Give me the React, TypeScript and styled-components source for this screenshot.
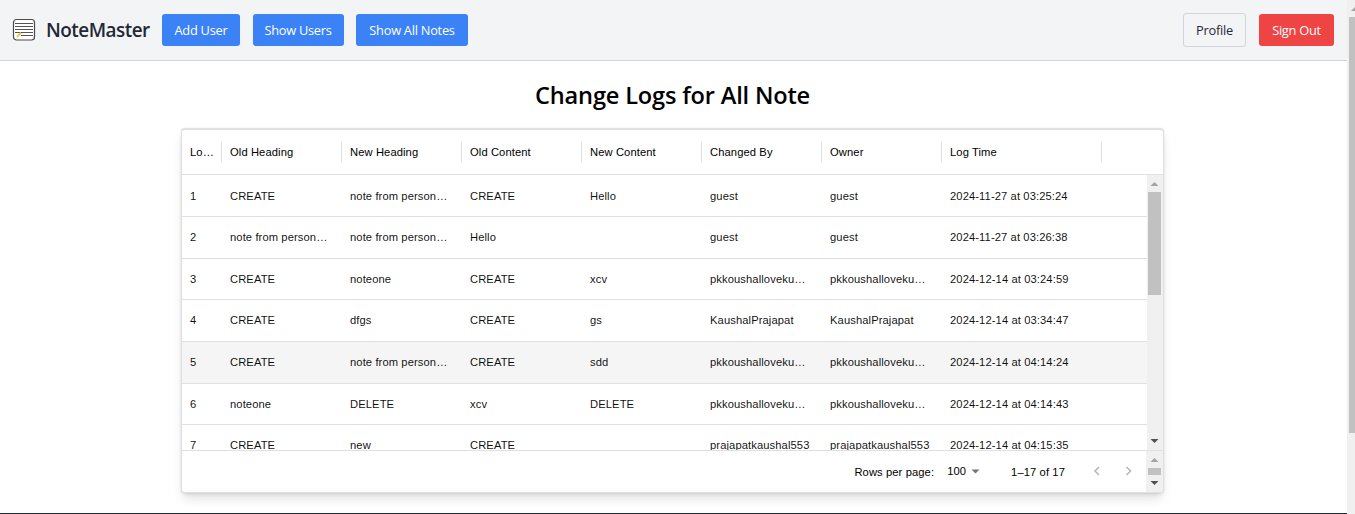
import React from "react";
import styled, { createGlobalStyle } from "styled-components";

const Global = createGlobalStyle`
  * { box-sizing: border-box; }
  html, body { margin: 0; padding: 0; height: 100%; overflow: hidden; background: #fff; }
  #root { height: 100vh; }
`;

const ui = `"Segoe UI", "Open Sans", "Noto Sans", sans-serif`;

const Window = styled.div`
  display: flex;
  height: 514px;
  overflow: hidden;
`;

const Page = styled.div`
  flex: 1;
  min-width: 0;
  display: flex;
  flex-direction: column;
  align-items: stretch;
`;

const Header = styled.header`
  height: 61px;
  flex: none;
  display: flex;
  align-items: center;
  justify-content: space-between;
  padding: 0 13px 0 12px;
  background: #f3f4f6;
  border-bottom: 1px solid #d1d5db;
  font-family: ${ui};
`;

const Group = styled.div<{ $gap: number }>`
  display: flex;
  align-items: center;
  gap: ${(p) => p.$gap}px;
`;

const Logo = styled.svg`
  display: block;
  width: 24px;
  height: 24px;
  margin-right: -2.5px;
`;

const Brand = styled.div`
  width: 103.5px;
  font-size: 18.9px;
  font-weight: 600;
  line-height: 26px;
  letter-spacing: -0.5px;
  color: #1f2937;
  white-space: nowrap;
`;

const Button = styled.button<{ $tone: "blue" | "red" | "plain"; $width: number }>`
  width: ${(p) => p.$width}px;
  height: ${(p) => (p.$tone === "plain" ? 34 : 32)}px;
  padding: 0;
  border: ${(p) => (p.$tone === "plain" ? "1px solid #d1d5db" : "0")};
  border-radius: 3px;
  background: ${(p) => ({ blue: "#3b82f6", red: "#ef4444", plain: "transparent" })[p.$tone]};
  color: ${(p) => (p.$tone === "plain" ? "#1f2937" : "#fff")};
  font: 400 12.8px/19px ${ui};
  letter-spacing: -0.25px;
  white-space: nowrap;
`;

const Main = styled.main`
  flex: 1;
  min-height: 0;
  display: flex;
  flex-direction: column;
  align-items: center;
  padding: 18px 2px 0 0;
`;

const Title = styled.h2`
  margin: 0 0 17px;
  height: 32px;
  font: 600 23.6px/32px ${ui};
  letter-spacing: -0.18px;
  color: #000;
  white-space: nowrap;
`;

const Card = styled.section`
  width: 983px;
  height: 365px;
  flex: none;
  display: flex;
  flex-direction: column;
  border: 1px solid #e0e0e0;
  border-top-width: 2px;
  border-radius: 4px;
  background: #fff;
  overflow: hidden;
  box-shadow: 0 8px 12px -2px rgba(0, 0, 0, 0.1), 0 3px 5px -2px rgba(0, 0, 0, 0.12), 0 0 2px rgba(0, 0, 0, 0.1);
  font: 400 11.2px/16px "Liberation Sans", Arial, sans-serif;
  letter-spacing: 0.1px;
  color: rgba(0, 0, 0, 0.94);
`;

const columns = "40px 120px 120px 120px 120px 120px 120px 160px";

const HeadRow = styled.div`
  height: 45px;
  flex: none;
  display: grid;
  grid-template-columns: ${columns};
  align-items: center;
  border-bottom: 1px solid #e0e0e0;
`;

const HeadCell = styled.div`
  height: 20px;
  line-height: 21px;
  margin-top: -1px;
  padding: 0 5px 0 8px;
  border-right: 1px solid #e0e0e0;
  overflow: hidden;
  text-overflow: ellipsis;
  white-space: nowrap;
  color: #000;
`;

const Body = styled.div`
  flex: 1;
  min-height: 0;
  display: flex;
`;

const Rows = styled.div`
  flex: 1;
  padding-top: 0.6px;
  overflow: hidden;
`;

const Row = styled.div<{ $hover: boolean }>`
  height: 41.6px;
  display: grid;
  grid-template-columns: ${columns};
  align-items: center;
  border-bottom: 1px solid #e0e0e0;
  background: ${(p) => (p.$hover ? "#f5f5f5" : "#fff")};
`;

const Cell = styled.div`
  padding: 0 8px 0.4px;
  overflow: hidden;
  text-overflow: ellipsis;
  white-space: nowrap;
`;

const Footer = styled.footer`
  height: 42px;
  flex: none;
  display: flex;
  border-top: 1px solid #e0e0e0;
`;

const Pager = styled.div`
  flex: 1;
  display: flex;
  align-items: center;
  justify-content: flex-end;
  padding: 0 10px 0 0;
  color: #000;
`;

const PageSize = styled.div`
  display: flex;
  align-items: center;
  gap: 5px;
  margin: -1px 31px 0 13px;
`;

const Chevrons = styled.svg`
  display: block;
  width: 44px;
  height: 12px;
  margin-left: 27px;
  margin-top: -2px;
`;

const Bar = styled.div<{ $width: number }>`
  width: ${(p) => p.$width}px;
  flex: none;
  display: flex;
  flex-direction: column;
  align-items: flex-end;
  background: #f0f0f0;
  overflow: hidden;
`;

const Arrow = styled.svg<{ $h: number }>`
  display: block;
  flex: none;
  width: 15px;
  height: ${(p) => p.$h}px;
`;

const Thumb = styled.div<{ $w: number; $h: number }>`
  width: ${(p) => p.$w}px;
  height: ${(p) => p.$h}px;
  margin-right: ${(p) => (p.$w === 13 ? 2 : 0)}px;
  flex: none;
  background: #c1c1c1;
`;

const Spacer = styled.div`
  flex: 1;
`;

const BottomLine = styled.div`
  height: 1px;
  flex: none;
  background: #1f2937;
`;

const headings = ["Lo…", "Old Heading", "New Heading", "Old Content", "New Content", "Changed By", "Owner", "Log Time"];

const note = "note from person…";
const pk = "pkkoushalloveku…";
const logs = [
  ["1", "CREATE", note, "CREATE", "Hello", "guest", "guest", "2024-11-27 at 03:25:24"],
  ["2", note, note, "Hello", "", "guest", "guest", "2024-11-27 at 03:26:38"],
  ["3", "CREATE", "noteone", "CREATE", "xcv", pk, pk, "2024-12-14 at 03:24:59"],
  ["4", "CREATE", "dfgs", "CREATE", "gs", "KaushalPrajapat", "KaushalPrajapat", "2024-12-14 at 03:34:47"],
  ["5", "CREATE", note, "CREATE", "sdd", pk, pk, "2024-12-14 at 04:14:24"],
  ["6", "noteone", "DELETE", "xcv", "DELETE", pk, pk, "2024-12-14 at 04:14:43"],
  ["7", "CREATE", "new", "CREATE", "", "prajapatkaushal553", "prajapatkaushal553", "2024-12-14 at 04:15:35"],
];

const Up = ({ h, y }: { h: number; y: number }) => (
  <Arrow $h={h} viewBox={`0 0 15 ${h}`}>
    <path d={`M2.5 ${y + 4}L6.5 ${y}L10.5 ${y + 4}Z`} fill="#a3a3a3" />
  </Arrow>
);

const Down = ({ h, y }: { h: number; y: number }) => (
  <Arrow $h={h} viewBox={`0 0 15 ${h}`}>
    <path d={`M2.5 ${y}H10.5L6.5 ${y + 4}Z`} fill="#505050" />
  </Arrow>
);

export default function App() {
  return (
    <>
      <Global />
      <Window>
        <Page>
          <Header>
            <Group $gap={12.5}>
              <Logo viewBox="0 0 24 24">
                <rect x="1.5" y="1.5" width="21" height="20.5" rx="3" fill="#fff" stroke="#4b4b4b" strokeWidth="1.2" />
                <path d="M3 5.5H21M3 8.5H21M3 11.5H21M3 14.5H21M9 17.5H21" stroke="#555" strokeWidth="1" />
                <path d="M5 18.8L9 14.8" stroke="#f5c431" strokeWidth="2" />
              </Logo>
              <Brand>NoteMaster</Brand>
              <Button $tone="blue" $width={78}>Add User</Button>
              <Button $tone="blue" $width={91}>Show Users</Button>
              <Button $tone="blue" $width={112}>Show All Notes</Button>
            </Group>
            <Group $gap={13}>
              <Button $tone="plain" $width={63}>Profile</Button>
              <Button $tone="red" $width={75}>Sign Out</Button>
            </Group>
          </Header>
          <Main>
            <Title>Change Logs for All Note</Title>
            <Card>
              <HeadRow>
                {headings.map((h) => (
                  <HeadCell key={h}>{h}</HeadCell>
                ))}
              </HeadRow>
              <Body>
                <Rows>
                  {logs.map((log) => (
                    <Row key={log[0]} $hover={log[0] === "5"}>
                      {log.map((value, i) => (
                        <Cell key={i}>{value}</Cell>
                      ))}
                    </Row>
                  ))}
                </Rows>
                <Bar $width={16}>
                  <Up h={17} y={7} />
                  <Thumb $w={13} $h={103} />
                  <Spacer />
                  <Down h={17} y={6} />
                </Bar>
              </Body>
              <Footer>
                <Pager>
                  <span>Rows per page:</span>
                  <PageSize>
                    <span>100</span>
                    <svg width="9" height="5" viewBox="0 0 9 5"><path d="M0.5 0.5H8.5L4.5 4.5Z" fill="#757575" /></svg>
                  </PageSize>
                  <span>1–17 of 17</span>
                  <Chevrons viewBox="0 0 44 12" fill="none" stroke="#b5b5b5" strokeWidth="1.5">
                    <path d="M7 2L3 6L7 10M34.5 2L38.5 6L34.5 10" />
                  </Chevrons>
                </Pager>
                <Bar $width={17}>
                  <Up h={17} y={7} />
                  <Thumb $w={13} $h={7} />
                  <Down h={17} y={6} />
                </Bar>
              </Footer>
            </Card>
            <Spacer />
          </Main>
          <BottomLine />
        </Page>
        <Bar $width={8}>
          <svg width="8" height="17" viewBox="0 0 8 17"><path d="M4 11L8 7V11Z" fill="#a3a3a3" /></svg>
          <Thumb $w={6} $h={416} />
        </Bar>
      </Window>
    </>
  );
}
